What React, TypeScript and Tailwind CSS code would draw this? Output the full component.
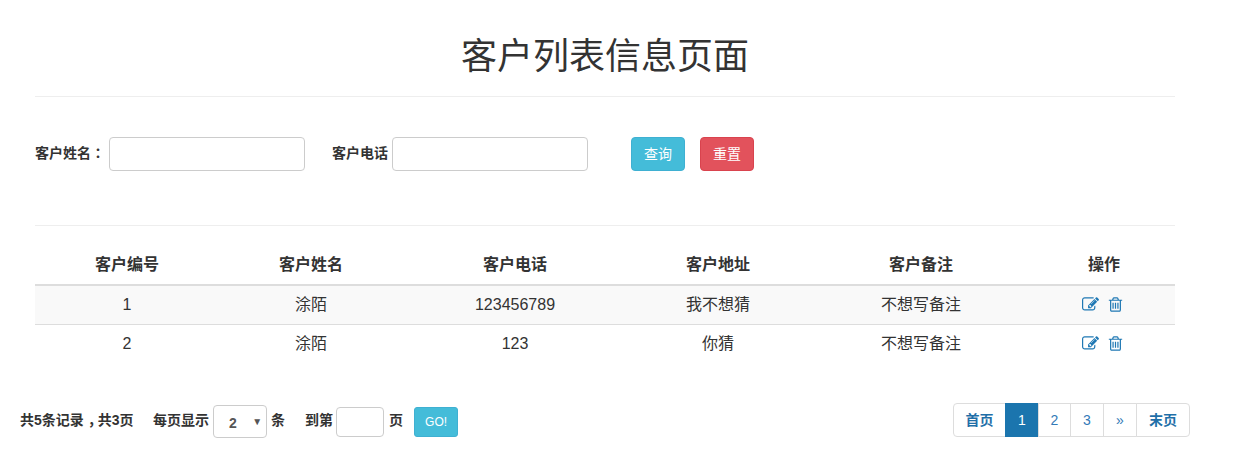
const font = { fontFamily: '"Liberation Sans", "Noto Sans CJK SC", sans-serif' };
const punct = { fontFamily: '"Noto Sans CJK TC", sans-serif' };

const rows = [
  { id: 1, name: '涂陌', phone: '123456789', address: '我不想猜', note: '不想写备注' },
  { id: 2, name: '涂陌', phone: '123', address: '你猜', note: '不想写备注' },
];

const headers = ['客户编号', '客户姓名', '客户电话', '客户地址', '客户备注', '操作'];

function EditIcon() {
  return (
    <svg viewBox="0 0 1792 1792" className="w-[17px] h-[17px]" fill="currentColor">
      <path d="M888 1184l116-116-152-152-116 116v56h96v96h56zm440-720q-16-16-33 1l-350 350q-17 17-1 33t33-1l350-350q17-17 1-33zm80 594v190q0 119-84.5 203.5t-203.5 84.5h-832q-119 0-203.5-84.5t-84.5-203.5v-832q0-119 84.5-203.5t203.5-84.5h832q63 0 117 25 15 7 18 23 3 17-9 29l-49 49q-14 14-32 8-23-6-45-6h-832q-66 0-113 47t-47 113v832q0 66 47 113t113 47h832q66 0 113-47t47-113v-126q0-13 9-22l64-64q15-15 35-7t20 29zm-96-738l288 288-672 672h-288v-288zm444 132l-92 92-288-288 92-92q28-28 68-28t68 28l152 152q28 28 28 68t-28 68z" />
    </svg>
  );
}

function TrashIcon() {
  return (
    <svg viewBox="0 0 1792 1792" className="w-[17px] h-[17px]" fill="currentColor">
      <path d="M704 736v576q0 14-9 23t-23 9h-64q-14 0-23-9t-9-23v-576q0-14 9-23t23-9h64q14 0 23 9t9 23zm256 0v576q0 14-9 23t-23 9h-64q-14 0-23-9t-9-23v-576q0-14 9-23t23-9h64q14 0 23 9t9 23zm256 0v576q0 14-9 23t-23 9h-64q-14 0-23-9t-9-23v-576q0-14 9-23t23-9h64q14 0 23 9t9 23zm128 724v-948h-896v948q0 22 7 40.5t14.5 27 10.5 8.5h832q3 0 10.5-8.5t14.5-27 7-40.5zm-672-1076h448l-48-117q-7-9-17-11h-317q-10 2-17 11zm928 32v64q0 14-9 23t-23 9h-96v948q0 83-47 143.5t-113 60.5h-832q-66 0-113-58.5t-47-141.5v-952h-96q-14 0-23-9t-9-23v-64q0-14 9-23t23-9h309l70-167q15-37 54-63t79-26h320q40 0 79 26t54 63l70 167h309q14 0 23 9t9 23z" />
    </svg>
  );
}

function SearchForm() {
  return (
    <div className="flex items-center h-[34px] mt-10 text-[#333] text-[14px] font-bold">
      <label className="w-[74px] pb-[2px] whitespace-nowrap">
        客户姓名<span style={punct}>：</span>
      </label>
      <input className="w-[196px] h-[34px] bg-white border border-[#ccc] rounded" />
      <label className="ml-[27px] w-[60px] pb-[2px]">客户电话</label>
      <input className="w-[196px] h-[34px] bg-white border border-[#ccc] rounded" />
      <button className="ml-[43px] w-[54px] h-[34px] rounded bg-[#44bcd9] border border-[#3fb0d2] text-white text-[14px] font-normal">
        查询
      </button>
      <button className="ml-[15px] w-[54px] h-[34px] rounded bg-[#e2525c] border border-[#d9434e] text-white text-[14px] font-normal">
        重置
      </button>
    </div>
  );
}

function CustomerTable() {
  return (
    <table className="w-[1140px] table-fixed border-collapse text-[16px] text-[#333] text-center">
      <colgroup>
        <col className="w-[184px]" />
        <col className="w-[184px]" />
        <col className="w-[224px]" />
        <col className="w-[182px]" />
        <col className="w-[224px]" />
        <col className="w-[142px]" />
      </colgroup>
      <thead>
        <tr className="h-[59px] border-b-2 border-[#ddd]">
          {headers.map((h) => (
            <th key={h} className="font-bold pt-[20px]">
              {h}
            </th>
          ))}
        </tr>
      </thead>
      <tbody>
        {rows.map((row, i) => (
          <tr key={row.id} className={i === 0 ? 'h-[39px] bg-[#f9f9f9] border-b border-[#ddd]' : 'h-[39px]'}>
            <td>{row.id}</td>
            <td>{row.name}</td>
            <td>{row.phone}</td>
            <td>{row.address}</td>
            <td>{row.note}</td>
            <td>
              <span className="inline-flex items-center justify-center gap-[8px] text-[#1f78b4] -ml-[2px] -mt-[2px] align-middle">
                <EditIcon />
                <TrashIcon />
              </span>
            </td>
          </tr>
        ))}
      </tbody>
    </table>
  );
}

function Pagination() {
  const cell = 'flex items-center justify-center h-[34px] border border-[#ddd] -ml-px bg-white text-[#337ab7] text-[14px] font-normal';
  return (
    <div className="flex">
      <a className="flex items-center justify-center h-[34px] w-[53px] border border-[#ddd] rounded-l bg-white text-[#1f6fa8] text-[14px] font-bold">首页</a>
      <a className="flex items-center justify-center h-[34px] w-[34px] -ml-px bg-[#1b75ae] border border-[#1b75ae] text-white text-[14px] font-normal">1</a>
      <a className={`${cell} w-[33px]`}>2</a>
      <a className={`${cell} w-[34px]`}>3</a>
      <a className={`${cell} w-[34px]`}>»</a>
      <a className="flex items-center justify-center h-[34px] w-[54px] -ml-px border border-[#ddd] rounded-r bg-white text-[#1f6fa8] text-[14px] font-bold">末页</a>
    </div>
  );
}

function Footer() {
  return (
    <div className="flex items-start justify-between mt-[40px] -mx-[15px] text-[14px] font-bold text-[#333]">
      <div className="flex items-center mt-[2px]">
        <span className="pb-[2px]">
          共5条记录<span className="pl-[4px] tracking-[-4px]">，</span>共3页
        </span>
        <span className="ml-[19.5px] pb-[2px]">每页显示</span>
        <div className="relative ml-[4px] w-[54px] h-[33px] border border-[#ccc] rounded bg-white">
          <span className="absolute left-[15px] top-[7px] text-[14px] text-[#555]">2</span>
          <span className="absolute right-[4px] top-[8px] text-[10px] font-normal text-[#555]">▼</span>
        </div>
        <span className="ml-[4px] pb-[2px]">条</span>
        <span className="ml-[20px] pb-[2px]">到第</span>
        <input className="ml-[3px] w-[48px] h-[30px] border border-[#ccc] rounded bg-white" />
        <span className="ml-[5px] pb-[2px]">页</span>
        <button className="ml-[11px] w-[44px] h-[30px] rounded-[3px] bg-[#44bcd9] border border-[#3fb0d2] text-white text-[12px] font-normal">
          GO!
        </button>
      </div>
      <Pagination />
    </div>
  );
}

export default function App() {
  return (
    <div className="w-[1140px] mx-[35px] bg-white" style={font}>
      <div className="h-[97px] pt-[37px] border-b border-[#eee] text-center">
        <h1 className="text-[36px] leading-[40px] font-normal text-[#333]">客户列表信息页面</h1>
      </div>
      <SearchForm />
      <div className="mt-[54px] border-t border-[#eee]" />
      <CustomerTable />
      <Footer />
    </div>
  );
}
